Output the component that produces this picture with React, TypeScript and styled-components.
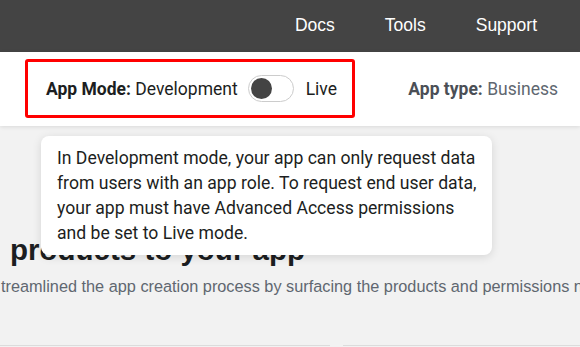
import React, { useState } from 'react';
import styled, { createGlobalStyle } from 'styled-components';

const GlobalStyle = createGlobalStyle`
  html, body {
    margin: 0;
    padding: 0;
    background: #f2f2f2;
    overflow: hidden;
  }
  * {
    box-sizing: border-box;
  }
`;

const Page = styled.div`
  width: 580px;
  height: 347px;
  overflow: hidden;
  background: #f2f2f2;
  font-family: Roboto, "Liberation Sans", Arial, sans-serif;
`;

const TopBar = styled.header`
  height: 52px;
  background: #444444;
  display: flex;
  justify-content: flex-end;
  align-items: center;
  gap: 50px;
  padding-right: 43px;
`;

const NavLink = styled.a`
  font-family: "Liberation Sans", Arial, sans-serif;
  font-size: 17.5px;
  color: #ffffff;
  text-decoration: none;
  margin-top: -1px;
`;

const SubBar = styled.div`
  position: relative;
  z-index: 2;
  height: 74px;
  background: #ffffff;
  box-shadow: 0 1px 4px rgba(0, 0, 0, 0.1);
  display: flex;
  align-items: center;
  justify-content: space-between;
  padding: 0 22px 0 25px;
`;

const ModeBox = styled.div`
  position: relative;
  display: flex;
  align-items: center;
  height: 59px;
  width: 330px;
  border: 3px solid #ff0000;
  border-radius: 3px;
  padding: 0 16px 0 18px;
  margin-top: -1px;
`;

const Label = styled.span<{ $muted?: boolean }>`
  font-size: 17.5px;
  color: ${({ $muted }) => ($muted ? '#606770' : '#1c1e21')};
  white-space: nowrap;

  b {
    font-weight: 700;
    color: ${({ $muted }) => ($muted ? '#4b4f56' : '#1c1e21')};
  }
`;

const Track = styled.button<{ $on: boolean }>`
  position: relative;
  width: 46px;
  height: 27px;
  margin: 0 12px 0 10px;
  padding: 0;
  border: 1px solid #cccccc;
  border-radius: 14px;
  background: #ffffff;
  cursor: pointer;
  flex-shrink: 0;
`;

const Knob = styled.span<{ $on: boolean }>`
  position: absolute;
  top: 2px;
  left: ${({ $on }) => ($on ? '22px' : '2px')};
  width: 21px;
  height: 21px;
  border-radius: 50%;
  background: #444444;
`;

const Tooltip = styled.div`
  position: absolute;
  top: 74px;
  left: 13px;
  width: 451px;
  padding: 10px 16px 9px 16px;
  background: #ffffff;
  border-radius: 8px;
  box-shadow: 0 2px 10px rgba(0, 0, 0, 0.12);
  font-size: 17.6px;
  line-height: 25px;
  color: #1c1e21;
  z-index: 5;
`;

const TipLine = styled.span`
  display: block;
  white-space: nowrap;
`;

const Content = styled.main`
  padding-top: 106px;
`;

const Heading = styled.h1`
  margin: 0 0 8px 0;
  padding-left: 10px;
  font-family: "Liberation Sans", Arial, sans-serif;
  font-size: 29.5px;
  line-height: 36px;
  font-weight: 700;
  color: #1c1e21;
  white-space: nowrap;
`;

const Subtitle = styled.p`
  margin: 0;
  padding-left: 1px;
  font-family: "Liberation Sans", Arial, sans-serif;
  font-size: 16.3px;
  line-height: 20px;
  color: #606770;
  white-space: nowrap;
  overflow: hidden;
`;

const CardRow = styled.div`
  display: flex;
  gap: 13px;
  margin-top: 49px;
`;

const Card = styled.div<{ $width: number }>`
  width: ${({ $width }) => $width}px;
  flex-shrink: 0;
  height: 20px;
  border-top: 1px solid #dcdcdc;
  background: #f2f2f2;
`;

const tipLines = [
  'In Development mode, your app can only request data',
  'from users with an app role. To request end user data,',
  'your app must have Advanced Access permissions',
  'and be set to Live mode.',
];

export default function App() {
  const [live, setLive] = useState(false);

  return (
    <Page>
      <GlobalStyle />
      <TopBar>
        <NavLink>Docs</NavLink>
        <NavLink>Tools</NavLink>
        <NavLink>Support</NavLink>
      </TopBar>
      <SubBar>
        <ModeBox>
          <Label>
            <b>App Mode:</b> Development
          </Label>
          <Track $on={live} onClick={() => setLive(!live)}>
            <Knob $on={live} />
          </Track>
          <Label>Live</Label>
          <Tooltip>
            {tipLines.map((line) => (
              <TipLine key={line}>{line}</TipLine>
            ))}
          </Tooltip>
        </ModeBox>
        <Label $muted>
          <b>App type:</b> Business
        </Label>
      </SubBar>
      <Content>
        <Heading>products to your app</Heading>
        <Subtitle>
          treamlined the app creation process by surfacing the products and permissions needed
        </Subtitle>
        <CardRow>
          <Card $width={330} />
          <Card $width={300} />
        </CardRow>
      </Content>
    </Page>
  );
}
